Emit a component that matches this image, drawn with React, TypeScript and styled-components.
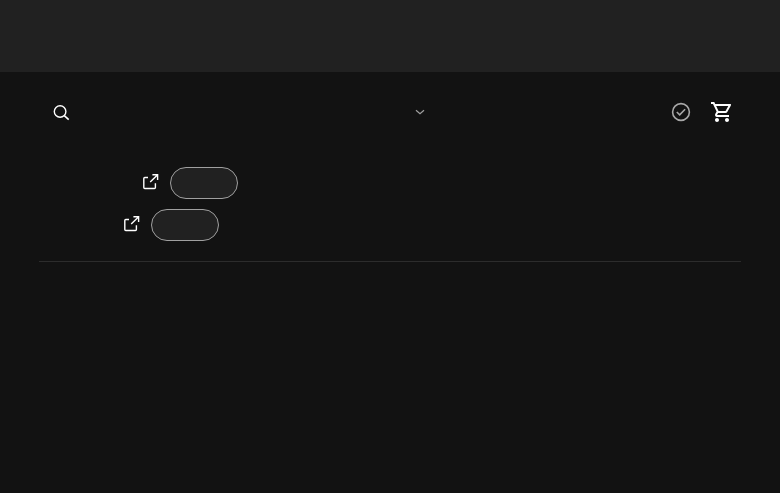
import React from "react";
import styled, { createGlobalStyle } from "styled-components";

const GlobalStyle = createGlobalStyle`
  * { box-sizing: border-box; }
  body {
    margin: 0;
    background: #121212;
    color: #ffffff;
    font-family: "Open Sans", sans-serif;
  }
  svg { display: block; flex: none; }
`;

const Page = styled.div`
  min-height: 100vh;
  background: #121212;
`;

const Banner = styled.div`
  height: 72px;
  background: #212121;
`;

const Toolbar = styled.header`
  display: grid;
  grid-template-columns: 1fr 24px 1fr;
  align-items: center;
  height: 80px;
  padding: 0 46px 0 50px;
`;

const Selector = styled.div`
  display: flex;
  justify-content: center;
  color: #a0a0a0;
  width: 24px;
  margin-left: 28px;
`;

const Actions = styled.div`
  display: flex;
  align-items: center;
  justify-content: flex-end;
  gap: 17px;
`;

const Links = styled.main`
  display: flex;
  flex-direction: column;
  gap: 10px;
  margin: 0 39px;
  padding: 15px 0 20px;
  border-bottom: 1px solid #2c2c2c;
`;

const LinkRow = styled.div<{ $indent: number }>`
  display: flex;
  align-items: center;
  gap: 7px;
  height: 32px;
  padding-left: ${({ $indent }) => $indent}px;
`;

const Pill = styled.div`
  width: 68px;
  height: 32px;
  border: 1px solid #a0a0a0;
  border-radius: 16px;
  background: #212121;
`;

const SearchIcon = () => (
  <svg width="24" height="24" viewBox="0 0 24 24" fill="none" stroke="#fff" strokeWidth="1.4">
    <circle cx="10.1" cy="11.5" r="5.8" />
    <path d="M14.3 15.6l4.4 4" strokeWidth="1.6" />
  </svg>
);

const ChevronIcon = () => (
  <svg width="12" height="12" viewBox="0 0 12 12" fill="none" stroke="currentColor" strokeWidth="1.2">
    <path d="M2 4.2l4 3.6 4-3.6" />
  </svg>
);

const CheckIcon = () => (
  <svg width="24" height="24" viewBox="0 0 24 24" fill="none" stroke="#a8a8a8" strokeWidth="1.6">
    <circle cx="12" cy="12" r="8.4" />
    <path d="M7.8 12l2.9 2.9 5.4-5.6" />
  </svg>
);

const CartIcon = () => (
  <svg width="24" height="24" viewBox="0 0 24 24" fill="#fff">
    <path d="M15.55 13c.75 0 1.41-.41 1.75-1.03l3.58-6.49A.996.996 0 0 0 20.01 4H5.21l-.94-2H1v2h2l3.6 7.59-1.35 2.44C4.52 15.37 5.48 17 7 17h12v-2H7l1.1-2h7.45zM6.16 6h12.15l-2.76 5H8.53L6.16 6zM7 18c-1.1 0-1.99.9-1.99 2S5.9 22 7 22s2-.9 2-2-.9-2-2-2zm10 0c-1.1 0-1.99.9-1.99 2s.89 2 1.99 2 2-.9 2-2-.9-2-2-2z" />
  </svg>
);

const ExternalIcon = () => (
  <svg width="24" height="24" viewBox="0 0 24 24" fill="none" stroke="#fff" strokeWidth="1.4">
    <path d="M9 6.5H5.8c-.6 0-1 .4-1 1v9c0 .6.4 1 1 1h9.6c.6 0 1-.4 1-1v-4.3" />
    <path d="M11.2 11.1l7.2-7.2M13.4 3.8h5.2v5.2" />
  </svg>
);

export default function App() {
  return (
    <Page>
      <GlobalStyle />
      <Banner />
      <Toolbar>
        <SearchIcon />
        <Selector>
          <ChevronIcon />
        </Selector>
        <Actions>
          <CheckIcon />
          <CartIcon />
        </Actions>
      </Toolbar>
      <Links>
        <LinkRow $indent={100}>
          <ExternalIcon />
          <Pill />
        </LinkRow>
        <LinkRow $indent={81}>
          <ExternalIcon />
          <Pill />
        </LinkRow>
      </Links>
    </Page>
  );
}
